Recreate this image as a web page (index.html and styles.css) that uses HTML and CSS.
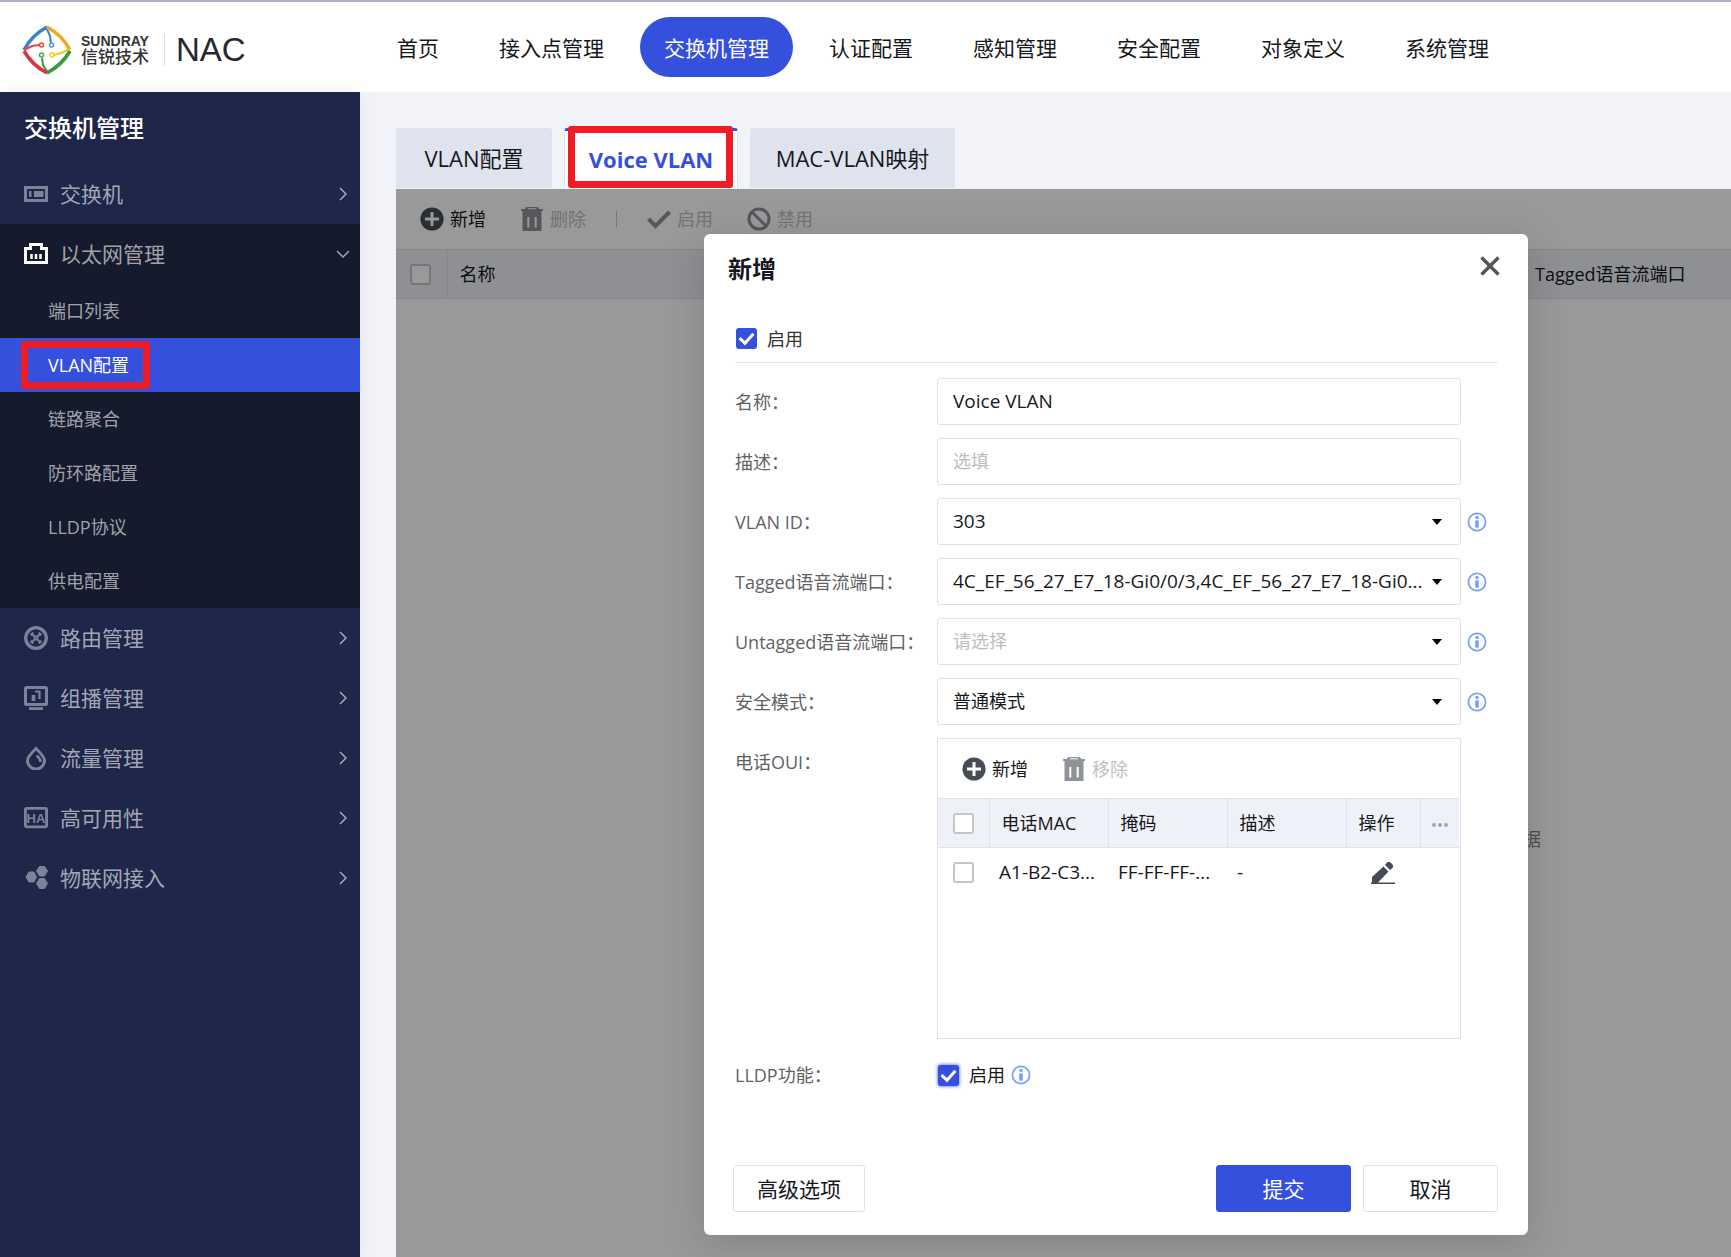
FILE: index.html
```html
<!DOCTYPE html>
<html lang="zh-CN">
<head>
<meta charset="utf-8">
<title>NAC - 交换机管理</title>
<link rel="stylesheet" href="styles.css">
</head>
<body>
<svg class="sprite" aria-hidden="true">
  <symbol id="plus" viewBox="0 0 24 24"><circle cx="12" cy="12" r="11.6" fill="currentColor"/><path d="M12 5v14M5 12h14" stroke="var(--cut)" stroke-width="3"/></symbol>
  <symbol id="trash" viewBox="0 0 22 24"><path fill="currentColor" fill-rule="evenodd" d="M0 2h4V1l2-1h10l2 1v1h4v2H0zM7 1.300v.9h8v-.9zM1.500 4h19v20h-19zM6.300 10v10.500h2V10zM13.700 10v10.500h2V10z"/></symbol>
  <symbol id="tick" viewBox="0 0 24 18"><path d="M1.500 9l7 7L22.500 2" fill="none" stroke="currentColor" stroke-width="4"/></symbol>
  <symbol id="ban" viewBox="0 0 24 24"><circle cx="12" cy="12" r="10" fill="none" stroke="currentColor" stroke-width="3"/><path d="M5 5l14 14" stroke="currentColor" stroke-width="3"/></symbol>
  <symbol id="info" viewBox="0 0 20 20"><circle cx="10" cy="10" r="8.600" fill="none" stroke="currentColor" stroke-width="1.700"/><circle cx="10" cy="5.500" r="1.700" fill="currentColor"/><rect x="8.200" y="8.200" width="3.600" height="7.600" rx="1" fill="currentColor"/></symbol>
  <symbol id="right" viewBox="0 0 14 14"><path d="M4 1l6 6-6 6" fill="none" stroke="currentColor" stroke-width="1.500"/></symbol>
  <symbol id="down" viewBox="0 0 14 14"><path d="M1 4l6 6 6-6" fill="none" stroke="currentColor" stroke-width="1.500"/></symbol>
</svg>

<header class="topbar">
  <div class="brand">
    <svg class="brand-mark" viewBox="0 0 50 50" fill="none" stroke-width="3.600">
      <path d="M2 25Q10 10 25 2" stroke="#3b7fd0"/><path d="M24 2l4 9 1 7" stroke="#3b7fd0" stroke-width="2"/><circle cx="29.500" cy="20" r="2" stroke="#4d94dd" stroke-width="1.500"/>
      <path d="M25 2Q40 10 48 25" stroke="#f0a81e"/><path d="M48 24l-9 4-7 2" stroke="#f5c928" stroke-width="2"/><circle cx="30" cy="30" r="2" stroke="#f2d21c" stroke-width="1.500"/>
      <path d="M48 26Q40 40 25 48" stroke="#379a41"/><path d="M26 48l-5-8-1-7" stroke="#379a41" stroke-width="2"/><circle cx="19.500" cy="30" r="2" stroke="#45a84d" stroke-width="1.500"/>
      <path d="M25 48Q10 40 2 26" stroke="#d43a3d"/><path d="M2 25l8-4 7-1" stroke="#e04a45" stroke-width="2"/><circle cx="19.500" cy="20" r="2" stroke="#ea4b40" stroke-width="1.500"/>
    </svg>
    <div class="brand-name"><span class="brand-en">SUNDRAY</span><span class="brand-cn">信锐技术</span></div>
    <span class="brand-product">NAC</span>
  </div>
  <nav class="nav">
    <a href="#">首页</a>
    <a href="#">接入点管理</a>
    <a href="#" class="is-active">交换机管理</a>
    <a href="#">认证配置</a>
    <a href="#">感知管理</a>
    <a href="#">安全配置</a>
    <a href="#">对象定义</a>
    <a href="#">系统管理</a>
  </nav>
</header>

<div class="layout">
  <aside class="sidebar">
    <h2 class="sidebar-title">交换机管理</h2>
    <a class="side-item" href="#">
      <svg class="side-icon" viewBox="0 0 24 24" fill="currentColor"><path fill-rule="evenodd" d="M0 4h24v16H0zM3 7v10h18V7z"/><rect x="5" y="9" width="2.500" height="6"/><rect x="10" y="9" width="9.500" height="6"/></svg>
      <span>交换机</span><svg class="chevron"><use href="#right"/></svg>
    </a>
    <div class="side-group">
      <a class="side-item is-open" href="#">
        <svg class="side-icon" viewBox="0 0 24 24"><path d="M1.500 6.500h5v-4h11v4h5v14h-21z" fill="none" stroke="currentColor" stroke-width="3"/><path d="M7.500 12v5M12 12v5M16.500 12v5" stroke="currentColor" stroke-width="2.500"/></svg>
        <span>以太网管理</span><svg class="chevron"><use href="#down"/></svg>
      </a>
      <a class="sub-item" href="#">端口列表</a>
      <a class="sub-item is-active" href="#">VLAN配置</a>
      <a class="sub-item" href="#">链路聚合</a>
      <a class="sub-item" href="#">防环路配置</a>
      <a class="sub-item" href="#">LLDP协议</a>
      <a class="sub-item" href="#">供电配置</a>
    </div>
    <a class="side-item" href="#">
      <svg class="side-icon" viewBox="0 0 24 24" fill="none" stroke="currentColor"><circle cx="12" cy="12" r="10.300" stroke-width="3.300"/><path d="M8 8l2.500 2.500h3L16 8M8 16l2.500-2.500h3L16 16M10.500 10v4M13.500 10v4" stroke-width="1.800"/><path d="M6.500 9.200l2.700-2.700M17.500 9.200l-2.700-2.700M6.500 14.800l2.700 2.700M17.500 14.800l-2.700 2.700" stroke-width="2"/></svg>
      <span>路由管理</span><svg class="chevron"><use href="#right"/></svg>
    </a>
    <a class="side-item" href="#">
      <svg class="side-icon" viewBox="0 0 24 24" fill="none" stroke="currentColor"><rect x="1.500" y="1.500" width="21" height="17" rx="1" stroke-width="3"/><path d="M5 22.600h14" stroke-width="2.800"/><path d="M11 5.500h4.500V13" stroke-width="2.200"/><path d="M9.500 9v6" stroke-width="3.600"/></svg>
      <span>组播管理</span><svg class="chevron"><use href="#right"/></svg>
    </a>
    <a class="side-item" href="#">
      <svg class="side-icon" viewBox="0 0 24 24" fill="none" stroke="currentColor"><path d="M12 2.500C8 6.500 3.500 10.500 3.500 14.500a8.500 8.500 0 0 0 17 0C20.500 10.500 16 6.500 12 2.500z" stroke-width="3"/><path d="M12.500 9.500q4 3 4 6.500" stroke-width="2.600"/></svg>
      <span>流量管理</span><svg class="chevron"><use href="#right"/></svg>
    </a>
    <a class="side-item" href="#">
      <svg class="side-icon" viewBox="0 0 24 24"><rect x="1.400" y="2.400" width="21.200" height="18.400" rx="1" fill="none" stroke="currentColor" stroke-width="2.800"/><text x="12" y="16.500" text-anchor="middle" class="ha-text">HA</text></svg>
      <span>高可用性</span><svg class="chevron"><use href="#right"/></svg>
    </a>
    <a class="side-item" href="#">
      <svg class="side-icon" viewBox="0 0 24 24" fill="currentColor" stroke="currentColor" stroke-linejoin="round"><path d="M5 6h5l2.500 5-2.500 5H5l-3-5zM15.500 .5h5L23.500 5l-3 5h-5l-3-5zM15.500 12.500h5l3 5-3 5h-5l-3-5z"/></svg>
      <span>物联网接入</span><svg class="chevron"><use href="#right"/></svg>
    </a>
  </aside>

  <main class="main">
    <div class="tabs">
      <button class="tab" type="button">VLAN配置</button>
      <button class="tab is-active" type="button">Voice VLAN</button>
      <button class="tab" type="button">MAC-VLAN映射</button>
    </div>
    <section class="panel">
      <div class="content">
        <div class="toolbar">
          <button class="tool" type="button"><svg class="icon"><use href="#plus"/></svg>新增</button>
          <button class="tool" type="button" disabled><svg class="icon"><use href="#trash"/></svg>删除</button>
          <span class="tool-divider"></span>
          <button class="tool" type="button" disabled><svg class="icon"><use href="#tick"/></svg>启用</button>
          <button class="tool" type="button" disabled><svg class="icon"><use href="#ban"/></svg>禁用</button>
        </div>
        <table class="list">
          <thead>
            <tr>
              <th class="col-check"><input class="check" type="checkbox" aria-label="全选"></th>
              <th class="col-name">名称</th>
              <th>Tagged语音流端口</th>
            </tr>
          </thead>
          <tbody>
            <tr><td class="empty" colspan="3">暂无数据</td></tr>
          </tbody>
        </table>
      </div>

      <div class="mask">
        <form class="dialog" role="dialog" aria-labelledby="dialog-title">
          <div class="dialog-head">
            <h3 id="dialog-title">新增</h3>
            <button class="close" type="button" aria-label="关闭"><svg viewBox="0 0 20 20"><path d="M1.500 1.500l17 17M18.500 1.500l-17 17" stroke="currentColor" stroke-width="3.400"/></svg></button>
          </div>
          <div class="dialog-body">
            <label class="enable"><input class="check" type="checkbox" checked>启用</label>
            <div class="row">
              <label for="name">名称：</label>
              <input class="field latin" id="name" type="text" value="Voice VLAN">
            </div>
            <div class="row">
              <label for="desc">描述：</label>
              <input class="field" id="desc" type="text" placeholder="选填">
            </div>
            <div class="row">
              <label for="vlan">VLAN ID：</label>
              <select class="field latin" id="vlan"><option>303</option></select>
              <svg class="info"><use href="#info"/></svg>
            </div>
            <div class="row">
              <label for="tagged">Tagged语音流端口：</label>
              <select class="field latin" id="tagged"><option>4C_EF_56_27_E7_18-Gi0/0/3,4C_EF_56_27_E7_18-Gi0...</option></select>
              <svg class="info"><use href="#info"/></svg>
            </div>
            <div class="row">
              <label for="untagged">Untagged语音流端口：</label>
              <select class="field is-empty" id="untagged"><option>请选择</option></select>
              <svg class="info"><use href="#info"/></svg>
            </div>
            <div class="row">
              <label for="mode">安全模式：</label>
              <select class="field" id="mode"><option>普通模式</option></select>
              <svg class="info"><use href="#info"/></svg>
            </div>
            <div class="row row-top">
              <span class="row-label">电话OUI：</span>
              <div class="oui">
                <div class="toolbar">
                  <button class="tool" type="button"><svg class="icon"><use href="#plus"/></svg>新增</button>
                  <button class="tool" type="button" disabled><svg class="icon"><use href="#trash"/></svg>移除</button>
                </div>
                <table class="oui-table">
                  <colgroup><col class="w-check"><col class="w-col"><col class="w-col"><col class="w-col"><col class="w-action"><col></colgroup>
                  <thead>
                    <tr>
                      <th><input class="check" type="checkbox" aria-label="全选"></th>
                      <th>电话MAC</th><th>掩码</th><th>描述</th><th>操作</th>
                      <th class="more"><svg viewBox="0 0 16 4"><circle cx="2" cy="2" r="2"/><circle cx="8" cy="2" r="2"/><circle cx="14" cy="2" r="2"/></svg></th>
                    </tr>
                  </thead>
                  <tbody>
                    <tr>
                      <td><input class="check" type="checkbox" aria-label="选择"></td>
                      <td class="latin">A1-B2-C3...</td><td class="latin">FF-FF-FF-...</td><td class="latin">-</td>
                      <td class="action"><button class="edit" type="button" aria-label="编辑"><svg viewBox="0 0 24 24" fill="currentColor"><path d="M1 22v-6L12.500 5.500l5 5L7 21.500zM14 4l2-2.500Q17.500 0 19.500 1.500l2 2q1.500 2 0 3.500L19 9zM0 21.500h24V23H0z"/></svg></button></td>
                      <td></td>
                    </tr>
                  </tbody>
                </table>
              </div>
            </div>
            <div class="row">
              <label for="lldp">LLDP功能：</label>
              <div class="lldp">
                <input class="check is-focus" id="lldp" type="checkbox" checked>
                <label for="lldp">启用</label>
                <svg class="info"><use href="#info"/></svg>
              </div>
            </div>
          </div>
          <div class="dialog-foot">
            <button class="btn btn-advanced" type="button">高级选项</button>
            <button class="btn btn-primary" type="submit">提交</button>
            <button class="btn" type="button">取消</button>
          </div>
        </form>
      </div>
    </section>
  </main>
</div>
</body>
</html>
```
FILE: styles.css
```css
*, *::before, *::after { box-sizing: border-box; }

:root {
  --blue: #3550dc;
  --red: #ee1c25;
  --line: #dce1ec;
  --ink: #16181d;
}

body {
  margin: 0;
  min-height: 100vh;
  display: flex;
  flex-direction: column;
  overflow-x: hidden;
  background: #f2f3f9;
  color: var(--ink);
  font: 18px/24px "Open Sans", "Noto Sans CJK SC", sans-serif;
}

a { color: inherit; text-decoration: none; }
button, input, select { font: inherit; color: inherit; }
button { padding: 0; border: 0; background: none; }
h2, h3 { margin: 0; }
.sprite { position: absolute; width: 0; height: 0; }

/* Top bar */
.topbar {
  display: flex;
  align-items: center;
  height: 92px;
  border-top: 2px solid #b1b5ca;
  background: #fff;
}
.brand { display: flex; align-items: center; width: 373px; padding: 6px 0 0 22px; }
.brand-mark { width: 50px; height: 50px; }
.brand-name {
  display: flex;
  flex-direction: column;
  margin-left: 9px;
  padding-right: 15px;
  border-right: 1px solid #dedede;
  color: #333;
}
.brand-en { font: bold 14px/14px "Liberation Sans", sans-serif; }
.brand-cn { font-size: 17px; line-height: 18px; font-weight: 500; }
.brand-product { margin-left: 11px; color: #26292e; font: 33px/36px "Liberation Sans", sans-serif; }

.nav { display: flex; gap: 12px; font-size: 21px; }
.nav a { height: 60px; padding: 0 24px; border-radius: 30px; line-height: 62px; white-space: nowrap; }
.nav .is-active { background: var(--blue); color: #fff; }

/* Sidebar */
.layout { flex: 1; display: flex; }
.sidebar {
  flex: none;
  width: 360px;
  background: #1e2649;
  box-shadow: 0 0 16px rgba(0, 0, 0, .06);
  color: #a2a6b5;
}
.sidebar-title { padding-left: 24px; color: #fff; font-size: 24px; font-weight: 500; line-height: 72px; }
.side-item { display: flex; align-items: center; height: 60px; padding: 0 10px 0 24px; font-size: 21px; }
.side-item span { flex: 1; margin-left: 12px; }
.side-icon { width: 24px; height: 24px; color: #7d829b; }
.is-open .side-icon { color: #fff; }
.chevron { width: 14px; height: 14px; }
.ha-text { fill: currentColor; font: bold 13px "Liberation Sans", sans-serif; }
.side-group { background: #151a2d; color: #a0a2aa; }
.sub-item { position: relative; display: block; padding-left: 48px; line-height: 54px; }
.sub-item.is-active { background: var(--blue); color: #fff; }
.sub-item.is-active::after,
.tab.is-active::after {
  content: "";
  position: absolute;
  border: 7px solid var(--red);
  border-radius: 3px;
}
.sub-item.is-active::after { left: 21px; top: 3px; width: 129px; height: 48px; }

/* Tabs */
.main { flex: 1; min-width: 0; display: flex; flex-direction: column; padding: 36px 0 0 36px; }
.tabs { display: flex; gap: 12px; }
.tab {
  position: relative;
  width: 156px;
  height: 60px;
  margin-bottom: 1px;
  border-radius: 3px 3px 0 0;
  background: #dfe3ee;
  font-size: 22px;
  line-height: 60px;
  white-space: nowrap;
}
.tab:last-child { width: 205px; }
.tab.is-active {
  width: 174px;
  height: 61px;
  margin: 0;
  border: 1px solid var(--line);
  border-top: 3px solid var(--blue);
  border-bottom: 0;
  background: #fff;
  color: var(--blue);
  font-weight: 700;
  line-height: 56px;
  padding-bottom: 2px;
}
.tab.is-active::after { inset: -5px 4px 1px 3px; }

/* List panel: the mask and the list share one grid cell */
.panel {
  flex: 1;
  display: grid;
  grid-template-columns: minmax(0, 1fr);
  background: #fff;
}
.content, .mask { grid-area: 1 / 1; }
.content { overflow: hidden; }
.toolbar { display: flex; align-items: center; height: 60px; padding-left: 24px; --cut: #fff; }
.tool { display: flex; align-items: center; gap: 6px; margin-right: 34px; }
.tool .icon { width: 24px; height: 24px; color: #454c58; }
.tool:disabled { color: #c0c1c4; }
.tool:disabled .icon { color: #8e9299; }
.tool-divider { width: 1px; height: 16px; margin: 0 30px 0 -4px; background: #c8c8c8; }

.list { width: 2218px; border-collapse: collapse; table-layout: fixed; }
.list th {
  height: 49px;
  padding: 0 12px;
  border: 1px solid var(--line);
  border-width: 1px 0;
  background: #eef1f7;
  font-weight: 400;
  text-align: left;
}
.list .col-check { width: 51px; padding: 0 14px; border-right-width: 1px; }
.list .col-name { width: 1076px; }
.list .empty { padding: 528px 0 0; color: #888; text-align: center; }

.check {
  position: relative;
  display: block;
  flex: none;
  appearance: none;
  width: 21px;
  height: 21px;
  margin: 0;
  border: 2px solid #c6c6c6;
  border-radius: 3px;
  background: #fff;
}
.check:checked { border-color: var(--blue); background: var(--blue); }
.check:checked::after {
  content: "";
  position: absolute;
  left: 4px;
  top: 0;
  width: 9px;
  height: 14px;
  border: solid #fff;
  border-width: 0 3px 3px 0;
  transform: rotate(42deg);
}
.check.is-focus { box-shadow: 0 0 3px 1px #7d98f5; }

/* Dialog */
.mask { position: relative; padding: 45px 0 22px 308px; background: rgba(0, 0, 0, .4); }
.dialog {
  display: flex;
  flex-direction: column;
  width: 824px;
  padding: 0 30px 23px 31px;
  border-radius: 6px;
  background: #fff;
  box-shadow: 0 8px 40px rgba(0, 0, 0, .15);
}
.dialog-head { display: flex; justify-content: space-between; height: 70px; margin: 0 -2px 0 -7px; }
.dialog-head h3 { font-size: 24px; line-height: 70px; }
.close { height: 64px; color: #555; }
.close svg { display: block; width: 20px; height: 20px; }
.enable {
  display: flex;
  align-items: center;
  gap: 10px;
  height: 59px;
  margin-bottom: 15px;
  padding: 11px 0 0 1px;
  border-bottom: 1px solid var(--line);
  color: #333;
}
.row { display: flex; align-items: center; margin-bottom: 13px; }
.row > label, .row-label { flex: none; width: 202px; color: #5f6166; }
.row-top { align-items: flex-start; }
.row-label { line-height: 48px; }
.latin { font-size: 19px; }
.field {
  width: 524px;
  height: 47px;
  padding: 0 15px 2px;
  border: 1px solid #dfe0e2;
  border-radius: 3px;
  background: #fff;
  outline: 0;
}
.field::placeholder, .field.is-empty { color: #bdbdbd; opacity: 1; }
select.field {
  appearance: none;
  background: url("data:image/svg+xml,%3Csvg xmlns='http://www.w3.org/2000/svg' width='10' height='6'%3E%3Cpath d='M0 0h10L5 6z'/%3E%3C/svg%3E") no-repeat right 18px center;
}
.info { width: 20px; height: 20px; margin-left: 6px; color: #75a0f8; }

.oui { width: 524px; height: 301px; padding-right: 1px; border: 1px solid var(--line); }
.oui .toolbar { height: 59px; }
.oui-table { width: 100%; border-collapse: collapse; table-layout: fixed; }
.oui-table th, .oui-table td { height: 49px; padding: 0 0 0 10px; font-weight: 400; text-align: left; white-space: nowrap; }
.oui-table th { padding-left: 12px; border: 1px solid var(--line); border-width: 1px 0 1px 1px; background: #eef1f7; }
.oui-table th:first-child, .oui-table td:first-child { padding-left: 15px; border-left: 0; }
.oui-table .more { padding: 0; text-align: center; }
.more svg { width: 16px; height: 4px; fill: #a3a5a9; vertical-align: middle; }
.w-check { width: 51px; }
.w-col { width: 119px; }
.w-action { width: 74px; }
.oui-table .action { padding: 0; text-align: center; }
.edit { color: #454c58; vertical-align: middle; }
.edit svg { display: block; width: 24px; height: 24px; }

.lldp { display: flex; align-items: center; height: 46px; padding-left: 1px; }
.lldp label { margin-left: 10px; }

.dialog-foot { display: flex; gap: 12px; margin: 54px 0 0 -2px; }
.btn {
  width: 135px;
  height: 47px;
  border: 1px solid #dfe0e2;
  border-radius: 3px;
  background: #fff;
  font-size: 21px;
}
.btn-advanced { width: 132px; margin-right: auto; }
.btn-primary { border-color: var(--blue); background: var(--blue); color: #fff; }
```
